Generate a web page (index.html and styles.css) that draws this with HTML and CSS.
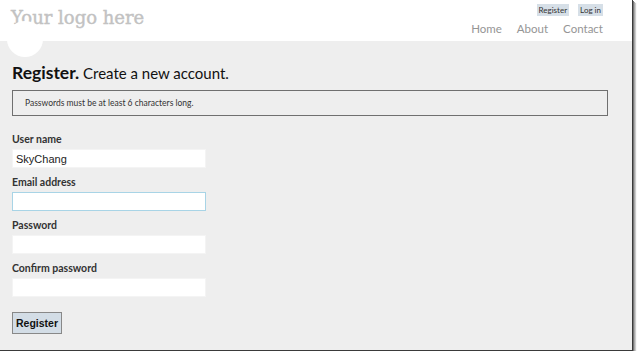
FILE: index.html
```html
<!DOCTYPE html>
<html>
<head>
<meta charset="utf-8">
<link rel="stylesheet" href="styles.css">
</head>
<body>
<div class="frame">
  <header class="site-header">
    <div class="logo">Your logo here</div>
    <div class="nav-area">
      <div class="login-links">
        <a class="mini-btn" href="#">Register</a>
        <a class="mini-btn" href="#">Log in</a>
      </div>
      <nav class="menu">
        <a href="#">Home</a>
        <a href="#">About</a>
        <a href="#">Contact</a>
      </nav>
    </div>
  </header>
  <main class="content">
    <h1 class="title"><strong>Register.</strong> Create a new account.</h1>
    <div class="summary">Passwords must be at least 6 characters long.</div>
    <form class="form">
      <label class="label">User name</label>
      <input class="field" type="text" value="SkyChang">
      <label class="label">Email address</label>
      <input class="field focus" type="text">
      <label class="label">Password</label>
      <input class="field" type="password">
      <label class="label">Confirm password</label>
      <input class="field" type="password">
      <button class="submit" type="button">Register</button>
    </form>
  </main>
</div>
</body>
</html>
```
FILE: styles.css
```css
html, body {
  margin: 0;
  padding: 0;
  background: #ffffff;
}
body {
  font-family: Lato, "Open Sans", sans-serif;
}
.frame {
  width: 632px;
  height: 350px;
  background: #eeeeee;
  border-right: 1px solid #3a3a3a;
  border-bottom: 1px solid #3a3a3a;
  box-shadow: 1px 1px 0 #777, 2px 2px 0 #aaa, 3px 3px 1px #ccc;
  overflow: hidden;
  display: flex;
  flex-direction: column;
}
.site-header {
  position: relative;
  height: 41px;
  background: #ffffff;
  display: flex;
  justify-content: space-between;
  box-sizing: border-box;
  padding: 0 29px 0 11px;
}
.site-header::after {
  content: "";
  position: absolute;
  left: 7px;
  top: 21px;
  width: 36px;
  height: 36px;
  border-radius: 50%;
  background: #ffffff;
}
.logo {
  font-family: "DejaVu Serif", serif;
  font-size: 18px;
  color: #c2c2c2;
  padding-top: 7px;
  letter-spacing: 0;
  -webkit-text-stroke: 0.4px #c2c2c2;
}
.nav-area {
  display: flex;
  flex-direction: column;
  align-items: flex-end;
}
.login-links {
  display: flex;
  gap: 9px;
  padding-top: 4px;
}
.mini-btn {
  font-size: 8px;
  line-height: 12px;
  padding: 0 2px;
  background: #d6dfe7;
  color: #333;
  text-decoration: none;
}
.menu {
  display: flex;
  gap: 15px;
  margin-top: 6px;
}
.menu a {
  font-size: 11.5px;
  color: #959595;
  text-decoration: none;
}
.content {
  padding: 20px 24px 0 12px;
}
.title {
  margin: 0;
  font-size: 15px;
  font-weight: normal;
  color: #111;
  line-height: 24px;
}
.title strong {
  font-weight: bold;
  font-size: 17.5px;
}
.summary {
  margin-top: 5px;
  border: 1px solid #6f6f6f;
  height: 26px;
  box-sizing: border-box;
  font-size: 8.5px;
  line-height: 24px;
  padding-left: 12px;
  color: #333;
}
.form {
  display: flex;
  flex-direction: column;
  align-items: flex-start;
  padding-top: 16px;
}
.label {
  font-size: 10.5px;
  font-weight: bold;
  color: #333;
  line-height: 14px;
  margin-bottom: 3px;
}
.field {
  width: 194px;
  height: 19px;
  box-sizing: border-box;
  border: 1px solid #f4f4f4;
  background: #fff;
  margin: 0 0 7px 0;
  padding: 0 3px;
  font-family: "Liberation Sans", Arial, sans-serif;
  font-size: 11px;
  color: #222;
  outline: none;
}
.field.focus {
  border-color: #a8d4e6;
}
.submit {
  margin-top: 8px;
  height: 22px;
  padding: 0 3px;
  background: #d3dde6;
  border: 1px solid #888;
  font-family: "Liberation Sans", Arial, sans-serif;
  font-weight: bold;
  font-size: 10.5px;
  color: #111;
}
```
